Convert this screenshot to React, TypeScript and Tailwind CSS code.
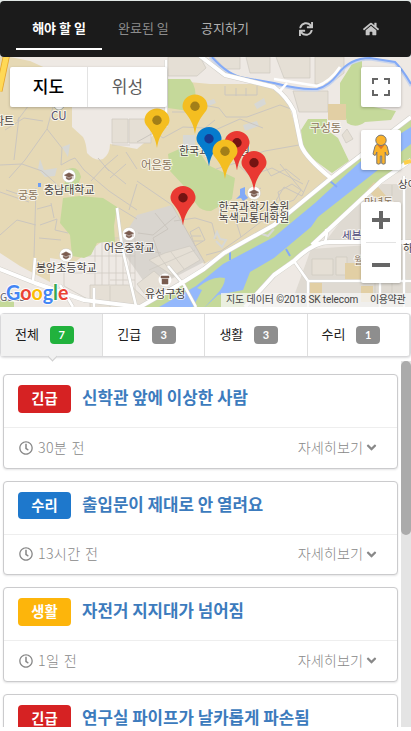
import React from 'react';
import { FaSync, FaHome, FaRegClock, FaAngleDown } from 'react-icons/fa';

const filters = [
  { label: '전체', count: 7, active: true },
  { label: '긴급', count: 3, active: false },
  { label: '생활', count: 3, active: false },
  { label: '수리', count: 1, active: false },
];

const issues = [
  { kind: '긴급', color: 'bg-[#d62223]', title: '신학관 앞에 이상한 사람', time: '30분 전' },
  { kind: '수리', color: 'bg-[#1e78cc]', title: '출입문이 제대로 안 열려요', time: '13시간 전' },
  { kind: '생활', color: 'bg-[#fdb50b]', title: '자전거 지지대가 넘어짐', time: '1일 전' },
  { kind: '긴급', color: 'bg-[#d62223]', title: '연구실 파이프가 날카롭게 파손됨', time: '2일 전' },
];

function Pin({ x, y, fill, dot }: { x: number; y: number; fill: string; dot: string }) {
  return (
    <g transform={`translate(${x} ${y})`}>
      <path d="M0 0C-1.2-8-3.6-13-7.5-18.5C-10.5-22.5-12.5-24.5-12.5-27.5A12.5 12 0 0 1 12.5-27.5C12.5-24.5 10.5-22.5 7.5-18.5C3.6-13 1.2-8 0 0Z" fill={fill} />
      <circle cy="-27.8" r="4.7" fill={dot} />
    </g>
  );
}

function School({ x, y }: { x: number; y: number }) {
  return (
    <g transform={`translate(${x} ${y})`}>
      <circle r="6.6" fill="#fff" stroke="#c8c2b8" strokeWidth=".4" />
      <path d="M-4.6-.8L0-3.2L4.6-.8L0 1.6ZM-2.7 1L0 2.4L2.7 1V2.7L0 4L-2.7 2.7ZM4-.6V2.7" fill="#7b5c50" stroke="#7b5c50" strokeWidth=".5" />
    </g>
  );
}

function Label({ x, y, size = 12, color = '#463f3c', anchor = 'start', children }: { x: number; y: number; size?: number; color?: string; anchor?: 'start' | 'middle'; children: string }) {
  return (
    <text x={x} y={y} fontSize={size} fill={color} textAnchor={anchor} stroke="#fff" strokeOpacity=".7" strokeWidth="2" paintOrder="stroke">
      {children}
    </text>
  );
}

function MapArt() {
  return (
    <svg className="block h-full w-full" viewBox="0 57 411 250">
      <rect y="57" width="411" height="250" fill="#eee9e4" />
      {/* campus ground */}
      <path d="M10 57L30 61L72 80V127L83 137Q86 142 87 153Q95 162 103 159Q110 154 110 144L137 149L150 138L165 127L168 105V80L210 84L259 84L274 90L288 102L298 135L304 153L332 178L274 223L204 264L172 205L137 220L120 248L104 240L75 262L50 258V282L20 266L0 253V57Z" fill="#e6d9b5" />
      <path d="M137 150L172 205L120 248L137 180Z" fill="#e6d9b5" />
      <path d="M137 215L172 205L204 262L150 290L118 245Z" fill="#d9d5cf" />
      <path d="M290 307L311 249L411 242V307ZM340 222L382 184H411V242H325Z" fill="#dfdad2" />
      {/* building blocks */}
      <g fill="#e5dfd5" stroke="#cdc8c0" strokeWidth=".7">
        <path d="M112 119H128V143H112ZM129 119H151V143H129ZM112 145H130M168 57V76H197L206 68L200 57ZM214 57H240V69H225ZM246 57H270V73H250ZM276 57H310V78H284ZM315 57H344V73L330 84H315ZM293 91H328V112H299ZM327 137L342 154M347 129L353 139L346 143L342 135Z" />
        <path d="M86 238H135V301H91L64 286V266ZM95 245V290M102 242V294M109 240V297M116 239V300M123 244V301M130 248V301M68 273H135M85 256H135M110 280H135" fill="none" />
        <path d="M149 260L165 253L190 246L200 260L173 276ZM160 257L174 276M171 252L184 269M149 270L195 250M137 284L154 271L169 284L147 297ZM90 307V285H130L154 307M110 286V307" />
        <path d="M312 259H333V275H312ZM336 257H347V275H336ZM368 280H411M375 248V302M392 185V300" />
      </g>
      {/* parks */}
      <g fill="#c5d99a">
        <path d="M168 79H190Q197 88 195 99L189 111L168 108Z" />
        <path d="M168 154L184 147L200 153L208 165L235 178L232 199L211 211Q201 211 197 205L183 185L170 171Z" />
        <path d="M63 198L79 196L103 198L117 207L114 226L115 242H105L97 243L91 255L84 258L72 256L70 235L60 223Z" />
        <path d="M66 170Q78 164 81 177L76 190H64Z" />
        <path d="M340 83L352 64L362 60V105L396 111L391 120L365 122Q356 129 347 123L345 113L340 105Z" />
        <path d="M308 119H327V130L338 138L349 161L332 173L303 152L301 130Z" />
        <path d="M411 117L325 182L274 224L207 267L137 307H245L274 273L311 245L382 181L411 160Z" />
        <path d="M0 300H14V307H0Z" />
      </g>
      {/* river and stream */}
      <path d="M411 127L370 153L340 180L315 203L274 237L223 264L196 286L159 307H205L218 295L243 290L250 272L274 258L311 227L318 217L360 184L411 144Z" fill="#94b8fc" />
      <path d="M197 288Q212 275 225 278Q225 286 216 295L205 307H193L202 290Z" fill="#c5d99a" />
      <path d="M210 57Q229 78 245 80L274 84Q300 91 317 90Q329 87 338 75Q350 59 370 59L395 63Q403 72 411 86" fill="none" stroke="#cad5ec" strokeWidth="3" />
      <path d="M212 57Q229 76 245 78L274 83Q300 90 317 89Q329 86 338 74Q350 58 370 58L395 62Q403 70 411 84M330 181L337 187M286 249L290 256M230 251V260" fill="none" stroke="#83aaf7" strokeWidth="2" />
      {/* buildings */}
      <g fill="#e2cfa4">
        <path d="M328 104H346V120H328ZM310 282H322V302H310ZM345 263H361V281H345ZM361 286H373V302H361ZM374 182L386 196L380 202L367 190Z" />
      </g>
      <g fill="#d7d8d5">
        <path d="M62 147L70 144L68 157ZM40 159L44 170L57 168L55 176L45 177L38 169ZM183 135H195V147H183ZM215 151L225 145L229 152L219 158ZM204 102L214 99L216 103L206 107ZM243 125L257 121L259 126L245 131ZM254 104L264 98L266 104L257 109Z" />
      </g>
      {/* minor paths */}
      <g fill="none" stroke="#cbc6bf" strokeWidth="1">
        <path d="M53 107L47 129L62 148L61 165L70 160L75 158L84 170L109 191L137 210M47 129L25 160L9 178M0 165L22 164L42 171L63 190M36 188L34 257M0 192L29 202M19 117L14 160M17 121L29 105M118 155L105 166L91 181M105 167L126 184M137 181L172 205L205 263" />
        <path d="M137 142L155 132L163 138L183 127L205 128L215 120M172 112H190L203 105L219 108L226 117H247L280 105L294 110M213 131L240 119L263 128M203 139L231 145L246 157L265 151L299 145M216 169L236 163L250 176L272 168L303 184M242 208L235 218L241 237L221 251L206 255M241 237L262 221L280 214M274 204L284 187L302 196L309 180M174 221L195 218L212 223L216 239M261 188L245 199M225 86V95H257V86M236 88V96M246 88V96M257 153L271 176L286 169L300 180" />
        <path d="M40 225L57 219L55 230L68 233M39 238L61 240M37 209L52 205M51 203L54 218M6 190L33 199M0 235L17 220L36 225M5 130L24 118L43 121M129 210L137 184M119 208L137 219M155 213L168 229L153 238L160 257M138 233L153 235L176 216M138 249L161 253" />
        <path d="M190 232L199 227L205 240L195 246ZM192 236H201M194 241H203M278 192L292 184L301 190L294 200L281 205ZM126 152L137 169M110 178L126 164M98 158L109 171M280 164L303 192" />
      </g>
      <path d="M214 239L217 232L220 239L226 240L222 247L216 241M252 239L259 233L268 236L274 229" fill="none" stroke="#d7d8d5" strokeWidth="2" />
      {/* campus pond */}
      <path d="M240 189L245 187V194L248 198L243 201L241 198L236 199L240 195Z" fill="#83aaf7" />
      {/* major roads */}
      <g fill="none" strokeLinejoin="round">
        <g stroke="#d0cec8" strokeWidth="5">
          <path d="M-3 268L35 283L84 300L140 307L180 284L204 269L224 253L274 225L330 179L411 117" />
          <path d="M199 55L225 75L274 87Q287 97 294 111L301 145Q305 157 332 179" />
          <path d="M245 307L274 275L294 261Q313 242 330 242H411M312 245L381 181L411 160" />
        </g>
        <path d="M294 261L308 281V307M308 281H411M404 176V307M380 282V307M325 242Q328 233 326 229M35 258L33 282M117 208L122 247L136 306M168 266L184 285L196 307M166 60V127M60 285L73 307M94 288V307" stroke="#d0cec8" strokeWidth="3.6" />
        <g stroke="#fff" strokeWidth="4">
          <path d="M-3 268L35 283L84 300L140 307L180 284L204 269L224 253L274 225L330 179L411 117" />
          <path d="M199 55L225 75L274 87Q287 97 294 111L301 145Q305 157 332 179" />
          <path d="M245 307L274 275L294 261Q313 242 330 242H411M312 245L381 181L411 160" />
        </g>
        <g stroke="#fff" strokeWidth="2.6">
          <path d="M294 261L308 281V307M308 281H411M404 176V307M380 282V307M325 242Q328 233 326 229M35 258L33 282M117 208L122 247L136 306M168 266L184 285L196 307M166 60V127M60 285L73 307M94 288V307M274 79L317 86Q330 82 340 67M280 91L287 83" />
        </g>
        <path d="M7 53L-1 91" stroke="#e7a52b" strokeWidth="7" />
        <path d="M7 53L-1 91" stroke="#ffd956" strokeWidth="5.4" />
        <path d="M404 163L411 161" stroke="#fdcf4a" strokeWidth="4" />
      </g>
      <path d="M38 183h3v4h-3z" fill="#6d9df4" />
      <circle cx="59" cy="105" r="5" fill="#fff" stroke="#a4aca4" />
      <School x={69} y={176} />
      <School x={129} y={234} />
      <School x={66} y={255} />
      <School x={254} y={193} />
      <circle cx="165" cy="280" r="6.4" fill="#fff" />
      <path d="M161 276h8v2h-8zM162 279h6v5h-6zM164 280v3m2-3v3" fill="#7b5c50" stroke="#7b5c50" strokeWidth=".5" />
      <g fontFamily='"Noto Sans CJK KR", sans-serif'>
        <Label x={-6} y={125} size={11}>파트</Label>
        <Label x={51} y={120} size={11.5} color="#555071">CU</Label>
        <Label x={44} y={194} size={11}>충남대학교</Label>
        <Label x={18} y={199} size={11} color="#8a745b">궁동</Label>
        <Label x={141} y={169} size={11.3} color="#8a745b">어은동</Label>
        <Label x={310} y={132} size={11.3} color="#8a745b">구성동</Label>
        <Label x={179} y={155} size={11}>한국과학기술원</Label>
        <Label x={104} y={252} size={11}>어은중학교</Label>
        <Label x={36} y={272} size={11}>봉암초등학교</Label>
        <Label x={145} y={298} size={11}>유성구청</Label>
        <Label x={254} y={211} size={11} anchor="middle">한국과학기술원</Label>
        <Label x={254} y={222} size={11} anchor="middle">녹색교통대학원</Label>
        <Label x={364} y={206} size={10.5} color="#8a745b">만년동</Label>
        <Label x={342} y={239} size={10.5} color="#494377">세븐일레븐</Label>
        <Label x={354} y={264} size={10.5} color="#8a745b">월평동</Label>
        <Label x={398} y={188} size={10.5}>상아</Label>
        <Label x={403} y={252} size={10.5}>하늘</Label>
        <Label x={0} y={301} size={10.5} color="#625c66">GS25</Label>
      </g>
      <Pin x={195} y={134} fill="#f4be20" dot="#a27e18" />
      <Pin x={157} y={148} fill="#f4be20" dot="#a27e18" />
      <Pin x={237} y={170.5} fill="#e93932" dot="#741412" />
      <Pin x={209} y={166.5} fill="#057bcd" dot="#173a91" />
      <Pin x={225} y={179} fill="#f4be20" dot="#a27e18" />
      <Pin x={254} y={190.5} fill="#e93932" dot="#741412" />
      <Pin x={183} y={225.5} fill="#e93932" dot="#741412" />
      <text x="6" y="300" fontFamily="Lato, sans-serif" fontSize="21.5" fontWeight="700" textLength="62.5" lengthAdjust="spacingAndGlyphs" stroke="#fff" strokeOpacity=".85" strokeWidth="2" paintOrder="stroke">
        <tspan fill="#4285f4">G</tspan><tspan fill="#ea4335">o</tspan><tspan fill="#fbbc05">o</tspan><tspan fill="#4285f4">g</tspan><tspan fill="#34a853">l</tspan><tspan fill="#ea4335">e</tspan>
      </text>
    </svg>
  );
}

function Pegman() {
  return (
    <svg className="h-[32px] w-[20px]" viewBox="0 0 20 32">
      <path d="M6.2 10.5H13.8Q15.8 10.7 16.3 13L18 20Q17.3 22 15.2 21L14.2 18V29.5Q12.5 30.8 10.7 29.5V22H9.3V29.5Q7.3 30.8 5.8 29.5V18L4.8 21Q2.7 22 2 20L3.8 13Q4.2 10.7 6.2 10.5Z" fill="#fcb329" stroke="#777" strokeWidth="1" />
      <path d="M6 10.7H14L10 15.3Z" fill="#de7324" />
      <circle cx="10" cy="6.3" r="5.2" fill="#fcb329" stroke="#777" strokeWidth="1" />
    </svg>
  );
}

export default function App() {
  return (
    <div className="h-[731px] w-[411px] overflow-hidden bg-white font-['Lato','Noto_Sans_CJK_KR',sans-serif] text-[#1c1c1c]">
      <div className="flex h-[727px] flex-col overflow-hidden">
        <div className="h-[57px] shrink-0 bg-[#e1e7e5] pt-px">
          <nav className="flex h-14 rounded bg-[#1b1b1b] pl-4 text-[13px] leading-[20px]">
            <div className="h-[49px] w-[86px] border-b-2 border-white pt-[17px] text-center font-['Noto_Sans_CJK_KR'] font-bold text-white">해야 할 일</div>
            <div className="w-[83px] pt-[17px] pl-4 font-['Noto_Sans_CJK_KR'] font-normal text-[#8c8c8c]">완료된 일</div>
            <div className="w-[115px] pt-[17px] pl-4 font-['Noto_Sans_CJK_KR'] font-normal text-[#b0b0b0]">공지하기</div>
            <FaSync className="mt-[21px] -ml-px size-[14px] text-[#c6c6c6]" />
            <FaHome className="mt-[20px] ml-[50px] size-[16px] text-[#c6c6c6]" />
          </nav>
        </div>

        <div className="relative h-[250px] shrink-0 overflow-hidden font-['Noto_Sans_CJK_KR',sans-serif]">
          <MapArt />
          <div className="absolute top-[10px] left-[10px] flex h-10 w-[157px] rounded-[2px] bg-white text-[17px] leading-[38px] shadow-[0_1px_3px_rgba(0,0,0,.25)]">
            <div className="w-[78px] border-r border-[#e3e3e3] text-center font-medium text-black">지도</div>
            <div className="flex-1 text-center font-normal text-[#5c5c5c]">위성</div>
          </div>
          <div className="absolute top-[10px] right-[10px] flex size-10 items-center justify-center rounded-[2px] bg-white shadow-[0_1px_3px_rgba(0,0,0,.25)]">
            <svg className="size-[18px]" viewBox="0 0 18 18" fill="none" stroke="#666" strokeWidth="2"><path d="M1 6V1H6M12 1H17V6M17 12V17H12M6 17H1V12" /></svg>
          </div>
          <div className="absolute top-[73px] right-[10px] flex size-10 items-center justify-center rounded-[2px] bg-white shadow-[0_1px_3px_rgba(0,0,0,.25)]"><Pegman /></div>
          <div className="absolute top-[145px] right-[10px] flex h-[81px] w-10 flex-col items-center rounded-[2px] bg-white shadow-[0_1px_3px_rgba(0,0,0,.25)]">
            <svg className="mt-[9px] size-[18px]" viewBox="0 0 18 18" stroke="#666" strokeWidth="4"><path d="M0 9H18M9 0V18" /></svg>
            <div className="mt-[13px] h-px w-[30px] bg-[#e3e3e3]" />
            <div className="mt-[20px] h-1 w-[18px] bg-[#666]" />
          </div>
          <div className="absolute right-0 bottom-0 flex h-[14px] w-[190px] bg-[#f5f5f5]/75 pl-[5px] font-['Roboto','Noto_Sans_CJK_KR'] text-[10px] leading-[14px] whitespace-nowrap text-[#444]">
            <span className="w-[144px] tracking-[-0.1px]">지도 데이터 ©2018 SK telecom</span><span className="tracking-[-0.4px]">이용약관</span>
          </div>
        </div>

        <div className="relative mt-[6px] flex h-[44px] shrink-0 rounded border border-[#d8d8da] bg-white shadow-[0_1px_2px_rgba(34,36,38,.15)]">
          {filters.map((f) => (
            <div key={f.label} className={`flex w-[102.2px] items-center border-r border-[#dedede] pl-[14px] ${f.active ? 'bg-[#f1f1f1]' : ''}`}>
              <span className="mb-[2px] w-[34.6px] font-['Noto_Sans_CJK_KR'] text-[13px] leading-[20px]">{f.label}</span>
              <span className={`flex h-[18px] w-6 items-center justify-center rounded text-[11px] leading-[18px] font-bold text-white ${f.active ? 'bg-[#21b23d]' : 'bg-[#8e8e8e]'}`}>{f.count}</span>
            </div>
          ))}
          <div className="absolute -bottom-[4px] left-[48px] size-[7px] rotate-45 border-r border-b border-[#cfcfcf] bg-[#f1f1f1]" />
        </div>

        <div className="mt-1 flex min-h-0 flex-1">
          <div className="flex w-[401px] flex-col gap-3 overflow-hidden pt-[13px] pr-[3px] pl-[3px]">
            {issues.map((item) => (
              <article key={item.title} className="h-[94.6px] shrink-0 rounded-[4px] border border-[#cbcbcd] bg-white shadow-[0_1px_2px_rgba(34,36,38,.12)]">
                <div className="flex h-[53px] border-b border-[#eeeeee] pt-[10px] pl-[14px]">
                  <span className={`flex h-[27.6px] w-[53px] items-center justify-center rounded pb-[2px] font-['Noto_Sans_CJK_KR'] text-[14.3px] font-bold text-white ${item.color}`}>{item.kind}</span>
                  <h3 className="ml-[11px] font-['Noto_Sans_CJK_KR'] text-[16.8px] leading-[24px] font-bold text-[#3c7bbd]">{item.title}</h3>
                </div>
                <div className="flex h-[39px] items-center pr-[20px] pl-[15px] font-['Noto_Sans_CJK_KR'] text-[14.2px] font-light text-[#888888]">
                  <FaRegClock className="mr-[5px] size-[14px]" />
                  <span className="tracking-[0.3px] [word-spacing:1px]">{item.time}</span>
                  <span className="ml-auto">자세히보기</span>
                  <FaAngleDown className="ml-[3px] h-[15px] w-[11px]" />
                </div>
              </article>
            ))}
          </div>
          <div className="w-[10px] bg-[#e4e4e4]"><div className="h-[174px] rounded-[5px] bg-[#ababab]" /></div>
        </div>
      </div>
    </div>
  );
}
